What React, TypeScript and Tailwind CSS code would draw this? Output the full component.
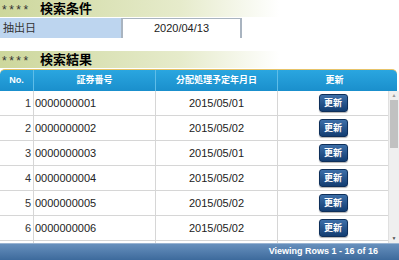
const rows = [
  { no: 1, code: "0000000001", date: "2015/05/01" },
  { no: 2, code: "0000000002", date: "2015/05/02" },
  { no: 3, code: "0000000003", date: "2015/05/01" },
  { no: 4, code: "0000000004", date: "2015/05/02" },
  { no: 5, code: "0000000005", date: "2015/05/02" },
  { no: 6, code: "0000000006", date: "2015/05/02" },
];

function SectionTitle({ text }: { text: string }) {
  return (
    <div className="h-[17px] flex items-center pl-[2px] bg-gradient-to-r from-[#cdd79c] via-[#e6ebcb] via-45% to-white to-70%">
      <span className="w-[38px] text-[12px] tracking-[2.5px] text-[#333] mt-[3px]">****</span>
      <span className="text-[13px] font-bold text-black leading-none">{text}</span>
    </div>
  );
}

function UpdateButton() {
  return (
    <button className="w-[29px] h-[18px] rounded-[3px] bg-gradient-to-b from-[#3d6fa8] to-[#123d72] border border-[#0e2f5a] text-white text-[9px] font-bold leading-none shadow-[0_1px_1px_rgba(0,0,0,0.3)]">
      更新
    </button>
  );
}

export default function App() {
  return (
    <div className="w-[399px] h-[260px] bg-white overflow-hidden font-['Liberation_Sans','Noto_Sans_CJK_JP',sans-serif] text-[12px] text-[#222]">
      <SectionTitle text="検索条件" />
      <div className="flex h-[20px] mt-[1px]">
        <div className="w-[121px] bg-[#bdd5ef] flex items-center pl-[3px] text-[11px] text-[#333]">
          抽出日
        </div>
        <div className="w-[121px] border-x-2 border-t border-[#a9b4c0] border-b-0 flex items-center justify-center text-[11px]">
          2020/04/13
        </div>
      </div>
      <div className="h-[13px]" />
      <SectionTitle text="検索結果" />
      <div className="mt-[1px] w-[397px]">
        <div className="flex h-[22px] rounded-t-[5px] bg-gradient-to-b from-[#2aa6e0] to-[#1a8fcc] border-t border-[#e6c36a] text-white text-[9px] font-bold">
          <div className="w-[34px] flex items-center justify-center border-r border-[#5fbde8]">No.</div>
          <div className="w-[122px] flex items-center justify-center border-r border-[#5fbde8]">証券番号</div>
          <div className="w-[122px] flex items-center justify-center border-r border-[#5fbde8]">分配処理予定年月日</div>
          <div className="flex-1 flex items-center justify-center pr-[6px]">更新</div>
        </div>
      </div>
      <div className="flex h-[152px] overflow-hidden">
        <div className="w-[388px]">
          {rows.map((r) => (
            <div key={r.no} className="flex h-[25px] border-b border-[#d6d6d6] text-[11px]">
              <div className="w-[34px] flex items-center justify-end pr-[2px] border-r border-[#d6d6d6] text-[#333]">{r.no}</div>
              <div className="w-[122px] flex items-center pl-[1px] border-r border-[#d6d6d6]">{r.code}</div>
              <div className="w-[122px] flex items-center justify-center border-r border-[#d6d6d6]">{r.date}</div>
              <div className="flex-1 flex items-center justify-center">
                <UpdateButton />
              </div>
            </div>
          ))}
          <div className="flex h-[2px]">
            <div className="w-[34px] border-r border-[#d6d6d6]" />
            <div className="w-[122px] border-r border-[#d6d6d6]" />
            <div className="w-[122px] border-r border-[#d6d6d6]" />
            <div className="flex-1" />
          </div>
        </div>
        <div className="w-[11px] h-[152px] bg-[#efefef] border-l border-[#e0e0e0] flex flex-col items-center">
          <div className="h-[9px] flex items-center text-[5px] text-[#999]">▲</div>
          <div className="w-[8px] h-[48px] bg-[#c1c1c1]" />
          <div className="flex-1" />
          <div className="h-[9px] flex items-center text-[5px] text-[#505050]">▼</div>
        </div>
      </div>
      <div className="h-[17px] bg-gradient-to-b from-[#6790bd] to-[#3d6a9c] flex items-center justify-end pr-[21px] text-white text-[9px] font-bold border-t border-[#9ab4d2]">
        Viewing Rows 1 - 16 of 16
      </div>
    </div>
  );
}
